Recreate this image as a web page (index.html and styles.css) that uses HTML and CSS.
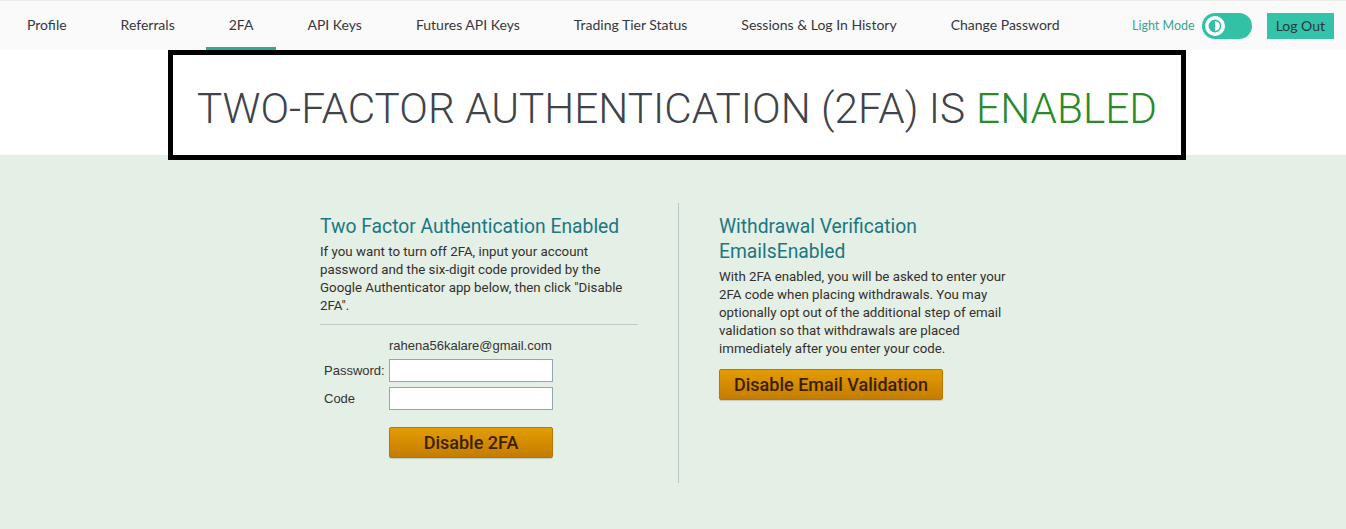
FILE: index.html
```html
<!DOCTYPE html>
<html>
<head>
<meta charset="utf-8">
<link rel="stylesheet" href="styles.css">
</head>
<body>
<nav class="topnav">
  <ul class="tabs">
    <li class="tab">Profile</li>
    <li class="tab">Referrals</li>
    <li class="tab active">2FA</li>
    <li class="tab">API Keys</li>
    <li class="tab">Futures API Keys</li>
    <li class="tab">Trading Tier Status</li>
    <li class="tab">Sessions &amp; Log In History</li>
    <li class="tab">Change Password</li>
  </ul>
  <div class="nav-right">
    <span class="mode-label">Light Mode</span>
    <span class="toggle">
      <span class="knob">
        <svg width="14" height="14" viewBox="0 0 14 14">
          <circle cx="7" cy="7" r="5.6" fill="none" stroke="#33c1a6" stroke-width="1.6"/>
          <path d="M7 1.4 A5.6 5.6 0 0 0 7 12.6 Z" fill="#33c1a6"/>
        </svg>
      </span>
    </span>
    <span class="logout">Log Out</span>
  </div>
</nav>
<header class="banner">
  <h1 class="banner-box">TWO-FACTOR AUTHENTICATION (2FA) IS <span class="ok">ENABLED</span></h1>
</header>
<main class="content">
  <div class="columns">
    <section class="col col-left">
      <h2 class="col-title">Two Factor Authentication Enabled</h2>
      <p class="col-text">If you want to turn off 2FA, input your account password and the six-digit code provided by the Google Authenticator app below, then click "Disable 2FA".</p>
      <hr class="rule">
      <div class="form">
        <div class="row"><span class="lbl"></span><span class="email">rahena56kalare@gmail.com</span></div>
        <div class="row"><span class="lbl">Password:</span><span class="field"></span></div>
        <div class="row"><span class="lbl">Code</span><span class="field"></span></div>
        <div class="row btn-row"><span class="lbl"></span><span class="btn btn-wide">Disable 2FA</span></div>
      </div>
    </section>
    <div class="divider"></div>
    <section class="col col-right">
      <h2 class="col-title">Withdrawal Verification EmailsEnabled</h2>
      <p class="col-text">With 2FA enabled, you will be asked to enter your 2FA code when placing withdrawals. You may optionally opt out of the additional step of email validation so that withdrawals are placed immediately after you enter your code.</p>
      <span class="btn">Disable Email Validation</span>
    </section>
  </div>
</main>
</body>
</html>
```

FILE: styles.css
```css
* { box-sizing: border-box; }
html, body { margin: 0; padding: 0; }
body {
  background: #e4efe6;
  font-family: Roboto, "Liberation Sans", sans-serif;
  color: #333;
  height: 529px;
  overflow: hidden;
}
.topnav {
  height: 50px;
  background: #fafafa;
  border-top: 1px solid #ececec;
  display: flex;
  align-items: center;
  justify-content: space-between;
  font-family: Lato, "Liberation Sans", sans-serif;
}
.tabs {
  list-style: none;
  margin: 0;
  padding: 0;
  display: flex;
  height: 49px;
}
.tab {
  position: relative;
  padding: 0 27px;
  display: flex;
  align-items: center;
  font-size: 14px;
  color: #363640;
  padding-bottom: 2px;
}
.tab.active::after {
  content: "";
  position: absolute;
  left: 50%;
  margin-left: -35px;
  width: 70px;
  bottom: 0;
  height: 3px;
  background: #2fa894;
}
.nav-right {
  display: flex;
  align-items: center;
  padding-right: 12px;
}
.mode-label {
  font-size: 12.5px;
  color: #3aa392;
  margin-right: 7px;
}
.toggle {
  width: 50px;
  height: 26px;
  border-radius: 13px;
  background: #33c1a6;
  display: flex;
  align-items: center;
  padding-left: 3px;
  margin-right: 15px;
}
.knob {
  width: 20px;
  height: 20px;
  border-radius: 50%;
  background: #fff;
  display: flex;
  align-items: center;
  justify-content: center;
}
.logout {
  background: #33c3a8;
  color: #2a3540;
  font-size: 14px;
  height: 26px;
  padding: 0 9px;
  display: flex;
  align-items: center;
}
.banner {
  background: #fff;
  height: 105px;
  display: flex;
  justify-content: center;
  padding-left: 8px;
}
.banner-box {
  position: relative;
  z-index: 1;
  margin: 0;
  width: 1018px;
  height: 110px;
  border: 5px solid #000;
  display: flex;
  align-items: center;
  justify-content: center;
  font-family: Roboto, sans-serif;
  font-weight: 300;
  font-size: 42.3px;
  color: #3e444a;
  padding-top: 6px;
}
.ok { color: #2a8a2a; margin-left: 0.26em; }
.content {
  padding-top: 48px;
}
.columns {
  width: 706px;
  margin: 0 auto;
  display: flex;
}
.col-left { width: 318px; }
.col-right { width: 300px; padding-top: 11px; }
.divider {
  width: 1px;
  background: #c4c4c4;
  height: 280px;
  margin: 0 40px;
}
.col-title {
  margin: 0;
  font-weight: 400;
  font-size: 19.3px;
  line-height: 25px;
  color: #1b7782;
}
.col-left .col-title { margin-top: 11px; }
.col-text {
  margin: 4px 0 0 0;
  font-size: 13.3px;
  line-height: 18px;
  color: #34302c;
}
.rule {
  border: 0;
  border-top: 1px solid #c8c8c8;
  margin: 9px 0 0 0;
}
.form {
  margin-top: 13px;
  font-family: "Liberation Sans", Arial, sans-serif;
  font-size: 13px;
  color: #333;
}
.row {
  display: flex;
  align-items: center;
  margin-bottom: 5px;
}
.lbl {
  width: 69px;
  padding-left: 4px;
  flex: none;
}
.email { line-height: 16px; }
.field {
  width: 164px;
  height: 23px;
  background: #fff;
  border: 1px solid #92a8b0;
}
.btn-row { margin-top: 17px; }
.btn {
  display: inline-flex;
  align-items: center;
  justify-content: center;
  height: 31px;
  padding: 0 14px;
  border: 1px solid #b87800;
  border-radius: 2px;
  background: linear-gradient(#e39c00, #c47c00);
  color: #3a1f00;
  font-family: Roboto, sans-serif;
  font-weight: 500;
  font-size: 18px;
  box-shadow: 0 1px 1px rgba(0,0,0,0.15);
}
.btn-wide { width: 164px; padding: 0; }
.col-right .btn { margin-top: 11px; }
```
